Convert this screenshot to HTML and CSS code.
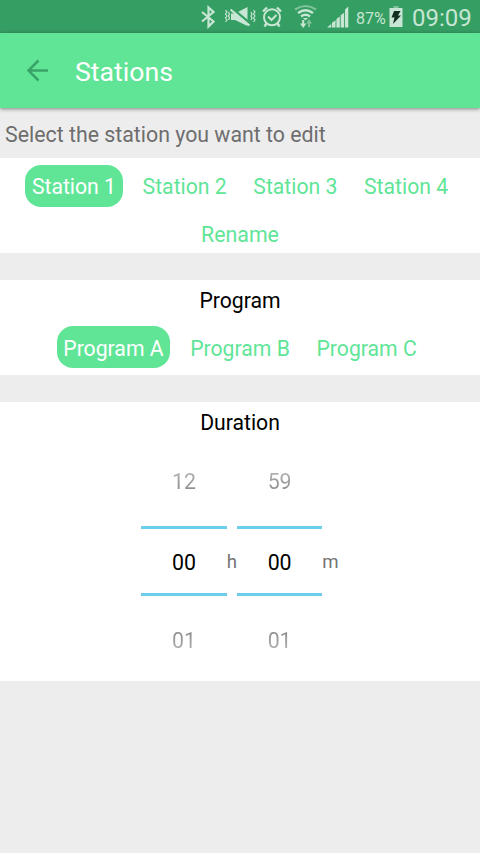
FILE: index.html
```html
<!DOCTYPE html>
<html lang="en">
<head>
<meta charset="utf-8">
<title>Stations</title>
<link rel="stylesheet" href="styles.css">
</head>
<body>
<div class="status">
  <svg class="status-icons" width="160" height="33" viewBox="190 0 160 33" fill="none" stroke="#c8e6d4" stroke-width="1.6">
    <path d="M202 12l11.500 9.500-5 5V7.500l5 4.500L202 21.500" stroke-width="2.200"/>
    <path d="M231 13.500h4l12.500-6.500v19l-12.500-6H231z" fill="#c8e6d4" stroke="none"/>
    <path d="M230.500 7L249.500 23" stroke="#349e63" stroke-width="2.500"/>
    <path d="M230.500 9.500L249.500 25.500" stroke-width="2.200"/>
    <path d="M225.500 10l1.500 2-1.500 2 1.500 2-1.500 2 1.500 2-1.500 2M228.500 12l1 2-1 2 1 2-1 2M251 12l1 2-1 2 1 2-1 2M253.500 10l1.500 2-1.500 2 1.500 2-1.500 2 1.500 2-1.500 2" stroke-width="1.200"/>
    <circle cx="272" cy="17.300" r="8" stroke-width="2"/>
    <path d="M268 16.500l3.500 3.500 5-5" stroke-width="2"/>
    <path d="M263 11.500l4-4M277 7.500l4 4M266.500 23.500l-2 3M277.500 23.500l2 3" stroke-width="2.400"/>
    <path d="M295 9.500q10.500-7 21 0" stroke="#7fc39b" stroke-width="2.200"/>
    <path d="M298 13q7.500-5.500 15 0M301 16.500q4.500-3.500 9 0" stroke-width="2.300"/>
    <path d="M303 18h5l-2.500 2.500z" fill="#c8e6d4" stroke="none"/>
    <path d="M303.200 20v5" stroke-width="2"/>
    <path d="M300 23.500h6.400l-3.200 4.500z" fill="#c8e6d4" stroke="none"/>
    <path d="M309 27v-5" stroke="#7fc39b" stroke-width="2"/>
    <path d="M306 23.500h6l-3-4.500z" fill="#7fc39b" stroke="none"/>
    <path d="M327 27.500l4.200-3.500v3.500zM332 22.800l3.500-2.500v7.200H332zM336.400 19l3.400-2.500v11h-3.400zM340.700 15.300l3.400-2.500v14.700h-3.400zM345 9.500l3.300-3v21H345z" fill="#c8e6d4" stroke="none"/>
  </svg>
  <span class="percent">87%</span>
  <svg class="battery" width="14" height="22" viewBox="0 0 14 22">
    <path d="M4.500 0h5v2h-5z" fill="#7fc39b"/>
    <path d="M.5 2h13v19H.5z" fill="#c8e6d4"/>
    <path d="M5 5h6.500L9 9.500h3L4 18l1.500-6.500H2.500z" fill="#12301f"/>
  </svg>
  <span class="clock">09:09</span>
</div>
<header class="appbar">
  <svg class="back" width="24" height="24" viewBox="0 0 24 24" fill="none" stroke="#39a367" stroke-width="2.500"><path d="M23 11.500H3M13.500 1.500l-10 10 10 10"/></svg>
  <h1 class="title">Stations</h1>
</header>
<p class="hint">Select the station you want to edit</p>
<section class="card stations">
  <div class="tabs">
    <span class="tab active">Station 1</span><span class="tab">Station 2</span><span class="tab">Station 3</span><span class="tab">Station 4</span>
  </div>
  <div class="rename">Rename</div>
</section>
<section class="card programs">
  <h2 class="heading">Program</h2>
  <div class="tabs">
    <span class="tab active">Program A</span><span class="tab">Program B</span><span class="tab">Program C</span>
  </div>
</section>
<section class="card duration">
  <h2 class="heading">Duration</h2>
  <div class="pickers">
    <div class="wheel"><span class="faded above">12</span><span class="value">00</span><span class="faded below">01</span></div>
    <span class="unit">h</span>
    <div class="wheel"><span class="faded above">59</span><span class="value">00</span><span class="faded below">01</span></div>
    <span class="unit">m</span>
  </div>
</section>
</body>
</html>
```
FILE: styles.css
```css
* { box-sizing: border-box; }
body {
  margin: 0;
  height: 853px;
  overflow: hidden;
  background: #ededed;
  font-family: Roboto, sans-serif;
  font-size: 21.333px;
  line-height: 25px;
}
h1, h2, p { margin: 0; font-weight: 400; }
svg { display: block; flex: none; }
.status {
  height: 33px;
  padding-left: 190px;
  display: flex;
  background: #349e63;
  color: #c8e6d4;
  white-space: nowrap;
}
.percent { width: 32px; margin-left: 6px; font-size: 16px; line-height: 37px; }
.battery { margin: 6px 0 0 1px; }
.clock { margin-left: 9px; font-size: 24px; line-height: 37px; }
.appbar {
  position: relative;
  height: 75px;
  padding-left: 25px;
  display: flex;
  align-items: center;
  background: #60e597;
  color: #fff;
  box-shadow: 0 1px 4px rgba(0, 0, 0, .45);
}
.title { margin: 2px 0 0 26px; font-size: 26.667px; line-height: 32px; }
.hint { height: 50px; padding: 14px 5px 0; color: #6d6d6d; }
.card { background: #fff; margin-bottom: 27px; }
.stations { height: 95px; padding-top: 7px; }
.programs { height: 95px; padding-top: 8px; }
.duration { height: 279px; padding-top: 8px; }
.tabs { display: flex; justify-content: center; gap: 13.333px; font-size: 21.200px; }
.tab {
  height: 42px;
  padding: 0 6.667px;
  border-radius: 16px;
  line-height: 45px;
  color: #60e597;
  white-space: nowrap;
}
.tab.active { background: #60e597; color: #fff; }
.stations .tab { line-height: 44px; }
.rename { margin-top: 15px; text-align: center; color: #60e597; }
.heading { font-size: 21.200px; text-align: center; color: #000; }
.programs .tabs { margin-top: 13px; }
.pickers { display: flex; justify-content: center; align-items: center; margin-top: 6px; height: 240px; }
.wheel {
  width: 85.333px;
  display: flex;
  flex-direction: column;
  align-items: center;
}
.faded { height: 25px; color: transparent; background-clip: text; -webkit-background-clip: text; }
.above { margin-bottom: 32px; background-image: linear-gradient(#b8b8b8, #858585); }
.below { margin-top: 32px; background-image: linear-gradient(#858585, #b8b8b8); }
.value {
  align-self: stretch;
  height: 70px;
  border-top: 3px solid #6ccdec;
  border-bottom: 3px solid #6ccdec;
  line-height: 67px;
  text-align: center;
}
.unit { margin-top: 2px; font-size: 18.667px; color: #757575; }
```
